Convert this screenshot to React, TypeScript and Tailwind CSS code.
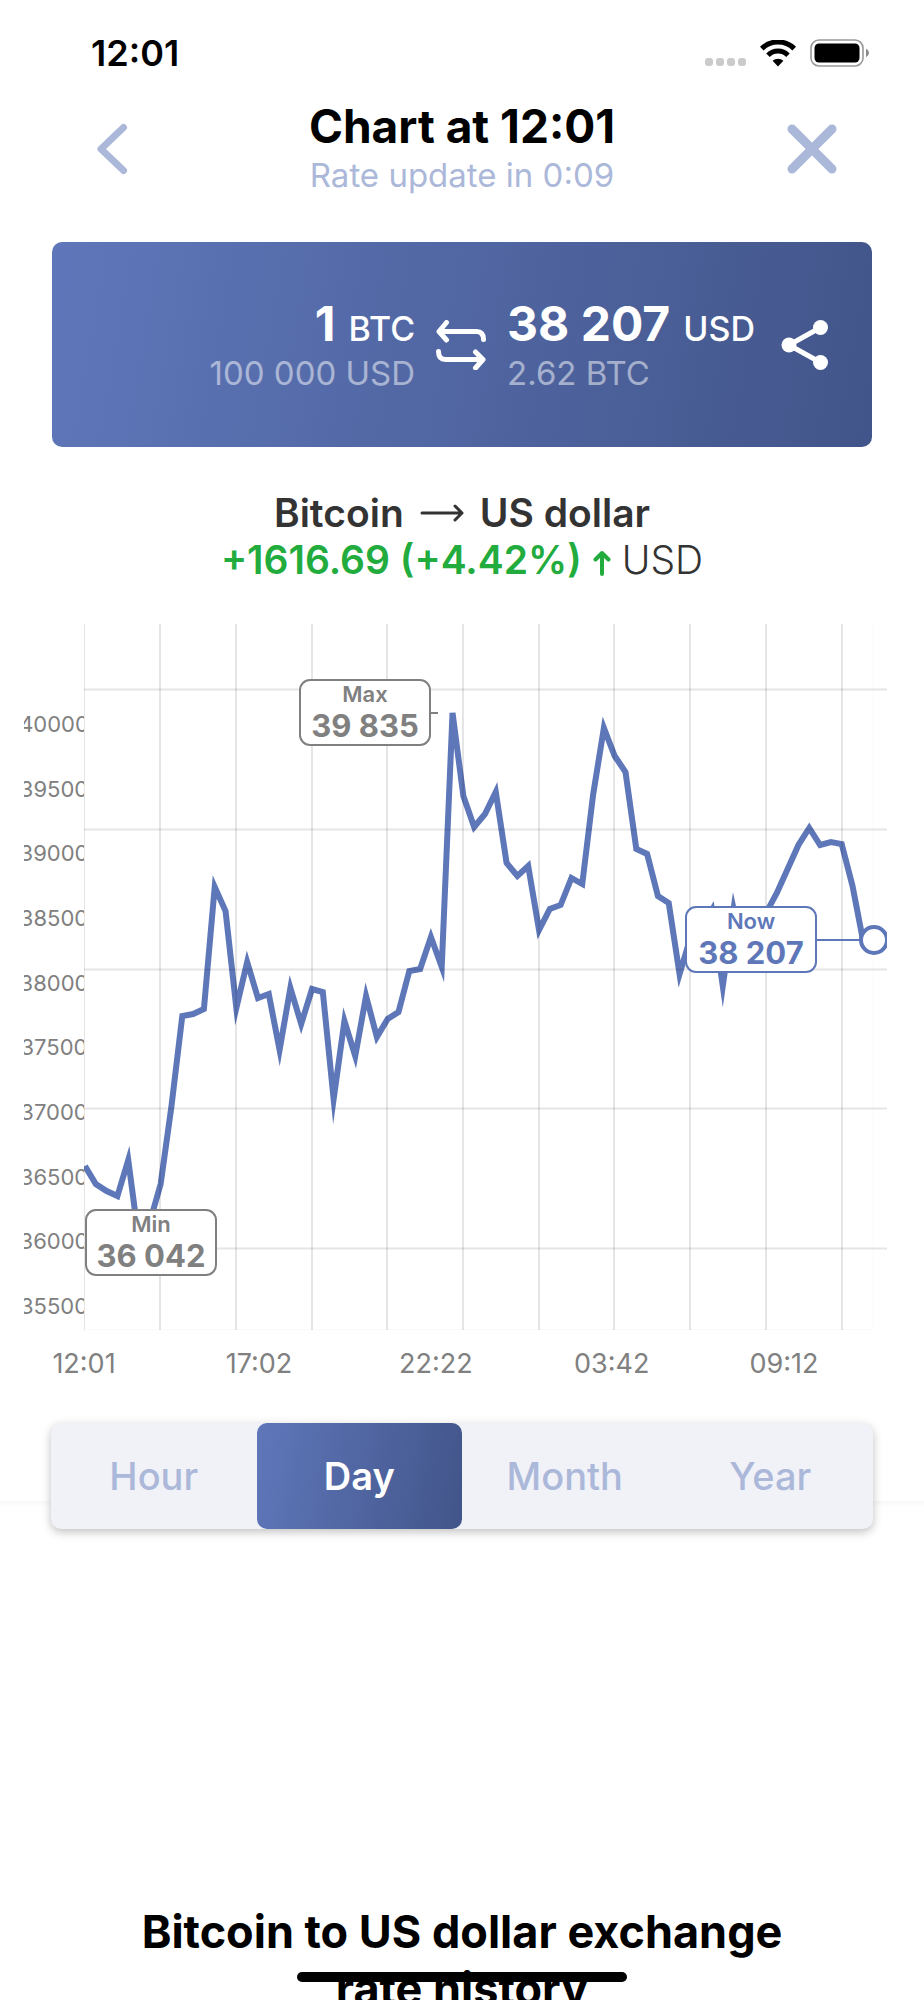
const STEP = 10.81;

// line heights in plot units, one reading every 20 minutes
const readings = [
    542, 560, 567, 572, 536, 618, 598, 560, 482, 392, 390, 385, 263, 287, 384, 338, 374, 370, 426, 364,
    400, 365, 368, 475, 397, 432, 372, 413, 395, 388, 347, 345, 313, 343, 89, 172, 203, 190, 168, 239,
    252, 242, 306, 285, 281, 254, 260, 171, 104, 132, 148, 225, 230, 272, 279, 350, 314, 305, 286, 362,
    285, 335, 310, 289, 269, 245, 221, 204, 221, 218, 220, 262, 318, 316,
];

const prices = ["40000", "39500", "39000", "38500", "38000", "37500", "37000", "36500", "36000", "35500"];
const times = ["12:01", "17:02", "22:22", "03:42", "09:12"];
const periods = ["Hour", "Day", "Month", "Year"];

const columns = [76, 152, 228, 303, 379, 455, 530, 606, 682, 758];
const rows = [65, 205, 345, 484, 624];

function StatusBar() {
    return (
        <div className="flex h-[100px] items-center justify-between pt-[6px] pl-[91px] pr-[54px]">
            <span className="text-[36px] leading-none font-semibold">12:01</span>
            <div className="flex items-center gap-[14px]">
                <div className="flex gap-[3px] pt-[18px]">
                    {[0, 1, 2, 3].map((dot) => (
                        <span key={dot} className="size-2 rounded-[3px] bg-[#cbcbcb]" />
                    ))}
                </div>
                <svg width="36" height="27" viewBox="0 0 36 27" fill="none" stroke="#000">
                    <path d="M1.8 8.6a23.2 23.2 0 0 1 32.4 0" strokeWidth="5.2" />
                    <path d="M8 15.2a14.3 14.3 0 0 1 20 0" strokeWidth="5" />
                    <path d="M12.6 20.8a8 8 0 0 1 10.8 0L18 26.5z" fill="#000" stroke="none" />
                </svg>
                <svg width="60" height="28" viewBox="0 0 60 28">
                    <rect x="1" y="1" width="52" height="26" rx="8" fill="none" stroke="#999" strokeWidth="1.6" />
                    <rect x="4.5" y="4.5" width="45" height="19" rx="4.5" />
                    <path d="M56 9.8v8.4q3-1.4 3-4.2t-3-4.2z" fill="#8a8a8a" />
                </svg>
            </div>
        </div>
    );
}

function Header() {
    return (
        <header className="flex items-center justify-between px-[87px]">
            <button aria-label="Back" className="w-[50px] pl-2">
                <svg width="34" height="52" viewBox="0 0 34 52" fill="none" stroke="#abb8d9" strokeWidth="7" strokeLinecap="round" strokeLinejoin="round">
                    <path d="M28.5 4.5 6 26l22.5 21.5" />
                </svg>
            </button>
            <div className="text-center">
                <h1 className="text-[46px] leading-[52px] font-bold">Chart at 12:01</h1>
                <p className="text-[33px] leading-[46px] text-[#abb8d9]">Rate update in 0:09</p>
            </div>
            <button aria-label="Close">
                <svg width="50" height="50" viewBox="0 0 50 50" stroke="#abb8d9" strokeWidth="9" strokeLinecap="round">
                    <path d="M5 5l40 40M45 5 5 45" />
                </svg>
            </button>
        </header>
    );
}

function RateCard() {
    return (
        <section className="mx-[52px] mt-[44px] flex h-[205px] items-center rounded-[10px] bg-[linear-gradient(100deg,#5f77ba,#42558a)] pr-[43px] text-white">
            <div className="flex-1 text-right">
                <p className="text-[34px] leading-[52px] font-medium">
                    <span className="mr-1 text-[48px] font-bold">1</span> BTC
                </p>
                <p className="text-[33px] leading-[36px] text-white/50">100 000 USD</p>
            </div>
            <button aria-label="Swap currencies" className="ml-[21px]">
                <svg width="50" height="50" viewBox="0 0 50 50" fill="none" stroke="#fff" strokeWidth="5" strokeLinecap="round" strokeLinejoin="round">
                    <path d="M10.5 2.5 3 11.5l7.500 8.500M3 11.500h37.500q7 0 7 8" />
                    <path d="M39.500 32 47 39.500l-7.500 8.500M47 39.500H9.500q-7 0-7-8" />
                </svg>
            </button>
            <div className="ml-[21px]">
                <p className="text-[34px] leading-[52px] font-medium">
                    <span className="mr-1 text-[48px] font-bold">38 207</span> USD
                </p>
                <p className="text-[33px] leading-[36px] text-white/50">2.62 BTC</p>
            </div>
            <button aria-label="Share" className="ml-[26px]">
                <svg width="48" height="50" viewBox="0 0 48 50" fill="#fff" stroke="#fff" strokeWidth="5">
                    <path d="M39.500 7.500 8 25l31.500 17.500" fill="none" />
                    <circle cx="39.500" cy="7.500" r="7.500" stroke="none" />
                    <circle cx="8" cy="25" r="7.500" stroke="none" />
                    <circle cx="39.500" cy="42.500" r="7.500" stroke="none" />
                </svg>
            </button>
        </section>
    );
}

function Summary() {
    return (
        <section className="mt-[42px] text-center text-[#333]">
            <h2 className="flex items-center justify-center gap-[16px] text-[39px] leading-[47px] font-semibold">
                Bitcoin
                <svg width="44" height="18" viewBox="0 0 44 18" fill="none" stroke="#333" strokeWidth="3" strokeLinecap="round" strokeLinejoin="round" aria-label="to">
                    <path d="M2 9h40M35 2l7 7-7 7" />
                </svg>
                US dollar
            </h2>
            <p className="flex items-center justify-center text-[39px] leading-[47px]">
                <span className="font-semibold text-[#22ac3e]">+1616.69 (+4.42%)</span>
                <svg className="mx-[11px] mt-[6px]" width="18" height="26" viewBox="0 0 18 26" fill="none" stroke="#22ac3e" strokeWidth="4" strokeLinecap="round" strokeLinejoin="round">
                    <path d="M9 24V3M2.500 9.500 9 3l6.500 6.500" />
                </svg>
                <span className="font-light">USD</span>
            </p>
        </section>
    );
}

function Bubble({ x, y, label, value, color }: { x: number; y: number; label: string; value: string; color: string }) {
    return (
        <g fill={color} textAnchor="middle">
            <rect x={x} y={y} width="130" height="65" rx="10" fill="#fff" stroke={color} strokeWidth="2" />
            <text x={x + 65} y={y + 22} className="text-[22px] font-semibold">{label}</text>
            <text x={x + 65} y={y + 57} className="text-[31px] font-bold">{value}</text>
        </g>
    );
}

function Chart() {
    const points = readings.map((y, i) => `${1 + i * STEP},${y}`).join(" ");

    return (
        <section className="mt-[41px] pl-[24px] pr-[37px]">
            <div className="flex">
                {/* Price axis, cut off by the plot on both sides */}
                <div className="flex w-[60px] flex-col items-center justify-between overflow-hidden pt-[88px] pb-[12px] text-[22px] leading-[24px] text-[#808080]">
                    {prices.map((price) => (
                        <span key={price}>{price}</span>
                    ))}
                </div>
                <svg viewBox="0 0 803 706" className="min-w-0 flex-1" role="img" aria-label="Bitcoin to US dollar, last day">
                    <polyline points={points} fill="none" stroke="#5e77b9" strokeWidth="6" strokeMiterlimit="10" />
                    <g stroke="#000" strokeOpacity="0.1" strokeWidth="2">
                        {columns.map((x) => (
                            <path key={x} d={`M${x} 0V706`} />
                        ))}
                        {rows.map((y) => (
                            <path key={y} d={`M0 ${y + 0.5}H803`} />
                        ))}
                        <path d="M0.500 0V706" strokeWidth="1" />
                        <path d="M789.500 0V706M0 705.500H789" strokeWidth="1" strokeOpacity="0.02" />
                    </g>
                    <path d="M346 89h8" stroke="#808080" strokeWidth="2" />
                    <path d="M733 316h45" stroke="#5e77b9" strokeWidth="2" />
                    <circle cx="790" cy="316" r="13" fill="#fff" stroke="#5e77b9" strokeWidth="4" />
                    <Bubble x={216} y={56} label="Max" value="39 835" color="#808080" />
                    <Bubble x={2} y={586} label="Min" value="36 042" color="#808080" />
                    <Bubble x={602} y={283} label="Now" value="38 207" color="#5e77b9" />
                </svg>
            </div>
            <div className="mt-[18px] flex justify-between pl-[25px] pr-[68px] text-center text-[27px] leading-[32px] text-[#808080]">
                {times.map((time) => (
                    <span key={time} className="w-[70px]">{time}</span>
                ))}
            </div>
        </section>
    );
}

function PeriodTabs() {
    return (
        <nav className="relative mx-[51px] mt-[43px] grid h-[106px] grid-cols-4 rounded-[10px] bg-[#f0f2f8] text-[38px] font-medium text-[#abb8d9] shadow-[0_3px_10px_rgba(0,0,0,0.25)]">
            {periods.map((period) => (
                <button
                    key={period}
                    className={period === "Day" ? "rounded-[10px] bg-[linear-gradient(100deg,#5f77ba,#42558a)] font-semibold text-white" : ""}
                >
                    {period}
                </button>
            ))}
        </nav>
    );
}

export default function App() {
    return (
        <main className="relative h-screen overflow-hidden bg-white font-['Inter',sans-serif] text-black">
            <StatusBar />
            <Header />
            <RateCard />
            <Summary />
            <Chart />
            <PeriodTabs />
            <section className="-mt-[28px] bg-linear-to-b from-[#f8f8f8] to-white to-[6px] px-[120px] pt-[402px] text-center">
                <h2 className="text-[45px] leading-[57px] font-bold">Bitcoin to US dollar exchange rate history</h2>
            </section>

            {/* Home indicator */}
            <div className="absolute bottom-[18px] left-1/2 h-[10px] w-[330px] -translate-x-1/2 rounded-full bg-black" />
        </main>
    );
}
